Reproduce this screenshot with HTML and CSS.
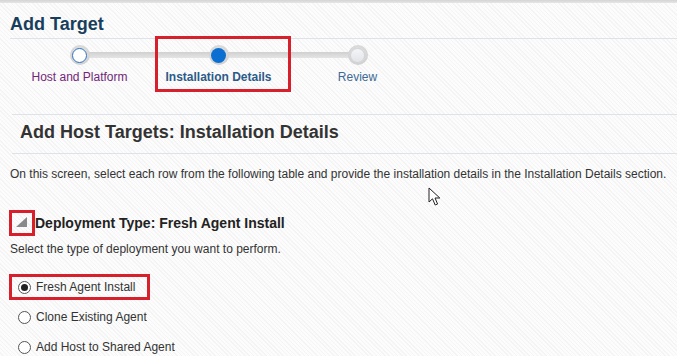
FILE: index.html
```html
<!DOCTYPE html>
<html lang="en">
<head>
  <meta charset="UTF-8">
  <meta name="viewport" content="width=device-width, initial-scale=1.0">
  <title>Add Target</title>
  <link rel="stylesheet" href="styles.css">
</head>
<body>
  <div class="page">
    <div class="top-bar"></div>
    <header class="page-header">
      <h1 class="page-title">Add Target</h1>
    </header>
    <nav class="train">
      <div class="train-step done">
        <span class="dot"></span>
        <span class="label">Host and Platform</span>
      </div>
      <div class="train-step current">
        <span class="dot"></span>
        <span class="label">Installation Details</span>
      </div>
      <div class="train-step todo">
        <span class="dot"></span>
        <span class="label">Review</span>
      </div>
      <span class="mark mark-step"></span>
    </nav>

    <section class="content">
      <h2 class="section-title">Add Host Targets: Installation Details</h2>
      <p class="intro">On this screen, select each row from the following table and provide the installation details in the Installation Details section.</p>

      <div class="deploy-header">
        <span class="disclosure"><span class="tri"></span></span>
        <h3>Deployment Type: Fresh Agent Install</h3>
      </div>
      <p class="hint">Select the type of deployment you want to perform.</p>

      <div class="options">
        <label class="option marked"><span class="radio checked"></span>Fresh Agent Install</label>
        <label class="option"><span class="radio"></span>Clone Existing Agent</label>
        <label class="option"><span class="radio"></span>Add Host to Shared Agent</label>
      </div>
    </section>

    <!-- mouse pointer from the screenshot -->
    <svg class="cursor" width="16" height="20" viewBox="0 0 16 20">
      <path d="M1 1 L1 15 L4.5 11.8 L7.2 18 L9.6 17 L7 11 L11.8 11 Z" fill="#fff" stroke="#222" stroke-width="1" stroke-linejoin="round"/>
    </svg>
  </div>
</body>
</html>
```

FILE: styles.css
```css
:root {
  --title: #173e5c;
  --text: #333;
  --rule: #dde3ea;
  --mark: #d7202b;
  --blue: #0a6fd0;
}
html, body {
  margin: 0;
  padding: 0;
}
body {
  font-family: "Liberation Sans", Arial, sans-serif;
  color: var(--text);
  background: repeating-linear-gradient(45deg, #fcfcfc 0 2px, #f4f4f4 2px 3px);
}
.page {
  position: relative;
  height: 356px;
  overflow: hidden;
}
.top-bar {
  height: 3px;
  background: linear-gradient(#d4d4d4, #e6e6e6);
}
.page-header {
  margin-left: 10px;
  padding-top: 11px;
  border-bottom: 1px solid var(--rule);
  height: 24px;
}
.page-title {
  margin: 0;
  font-size: 18px;
  line-height: 20px;
  font-weight: bold;
  color: var(--title);
}
/* train */
.train {
  position: relative;
  display: flex;
  padding-left: 10px;
  padding-top: 6px;
  height: 69px;
}
.train::before {
  content: "";
  position: absolute;
  left: 80px;
  width: 278px;
  top: 13px;
  height: 6px;
  background: linear-gradient(#d0d0d0, #e4e4e4);
}
.train-step {
  position: relative;
  width: 139px;
  display: flex;
  flex-direction: column;
  align-items: center;
}
.dot {
  box-sizing: border-box;
  width: 20px;
  height: 20px;
  border-radius: 50%;
  background: radial-gradient(circle at 50% 40%, #e6e6e6, #c9c9c9);
  display: flex;
  align-items: center;
  justify-content: center;
}
.dot::after {
  content: "";
  box-sizing: border-box;
  width: 15px;
  height: 15px;
  border-radius: 50%;
}
.done .dot::after {
  background: #fff;
  border: 1.5px solid #2b74c4;
}
.current .dot::after {
  background: var(--blue);
}
.todo .dot::after {
  background: linear-gradient(#f4f5f7, #e2e4e8);
  border: 1px solid #d2d5da;
}
.label {
  margin-top: 5px;
  font-size: 12px;
  line-height: 14px;
  white-space: nowrap;
}
.done .label { color: #72267a; }
.current .label { color: #2c5a88; font-weight: bold; }
.todo .label { color: #3d6a96; }
.mark {
  position: absolute;
  box-sizing: border-box;
  border: 3px solid var(--mark);
}
.mark-step {
  left: 155px;
  top: -3px;
  width: 136px;
  height: 56px;
}
/* content */
.content {
  padding: 0 0 0 10px;
}
.section-title {
  margin: 0 0 0 2px;
  padding-left: 8px;
  height: 38px;
  line-height: 34px;
  border-top: 1px solid var(--rule);
  border-bottom: 1px solid var(--rule);
  font-size: 18px;
  font-weight: bold;
  color: #333;
}
.intro {
  margin: 13px 0 0;
  font-size: 12px;
  line-height: 14px;
}
.deploy-header {
  display: flex;
  align-items: center;
  margin-top: 29px;
  height: 26px;
  margin-left: -1px;
}
.disclosure {
  box-sizing: border-box;
  width: 26px;
  height: 26px;
  border: 3px solid var(--mark);
  display: flex;
  align-items: flex-end;
  justify-content: flex-end;
  padding: 0 5px 6px 0;
}
.tri {
  width: 0;
  height: 0;
  border-left: 11px solid transparent;
  border-bottom: 10px solid #8a8a8a;
}
.deploy-header h3 {
  margin: 0;
  font-size: 14px;
  font-weight: bold;
  color: #222;
}
.hint {
  margin: 6px 0 0;
  font-size: 12px;
  line-height: 14px;
}
.options {
  display: flex;
  flex-direction: column;
  align-items: flex-start;
  margin-top: 18px;
  margin-left: -1px;
  gap: 4px;
}
.option {
  box-sizing: border-box;
  display: flex;
  align-items: center;
  height: 26px;
  padding: 0 6px;
  font-size: 12px;
  color: #333;
  border: 3px solid transparent;
}
.option.marked {
  border-color: var(--mark);
  padding-right: 12px;
}
.radio {
  box-sizing: border-box;
  width: 13px;
  height: 13px;
  border-radius: 50%;
  border: 1px solid #555;
  background: #fff;
  margin-right: 5px;
  display: flex;
  align-items: center;
  justify-content: center;
}
.radio.checked::after {
  content: "";
  width: 7px;
  height: 7px;
  border-radius: 50%;
  background: #222;
}
.cursor {
  position: absolute;
  left: 428px;
  top: 187px;
}
```
